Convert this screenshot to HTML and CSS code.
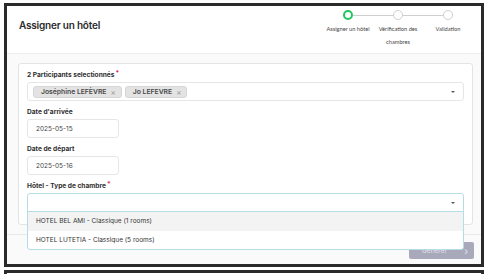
FILE: index.html
```html
<!DOCTYPE html>
<html lang="fr">
<head>
    <meta charset="UTF-8">
    <meta name="viewport" content="width=device-width, initial-scale=1.0">
    <title>Assigner un hôtel</title>
    <link rel="stylesheet" href="styles.css">
</head>
<body>
    <div class="frame">
        <!-- Modal Header -->
        <div class="modal-header">
            <h1>Assigner un hôtel</h1>
            <div class="stepper">
                <div class="step-dots">
                    <span class="dot active"></span>
                    <span class="bar"></span>
                    <span class="dot"></span>
                    <span class="bar"></span>
                    <span class="dot"></span>
                </div>
                <div class="step-labels">
                    <span>Assigner un hôtel</span>
                    <span>Vérification des chambres</span>
                    <span>Validation</span>
                </div>
            </div>
        </div>

        <!-- Modal Body -->
        <div class="modal-body">
            <div class="card">
                <div class="field">
                    <label>2 Participants selectionnés<span class="req">*</span></label>
                    <div class="multi">
                        <span class="tag">Joséphine LEFÈVRE <span class="x">×</span></span>
                        <span class="tag">Jo LEFEVRE <span class="x">×</span></span>
                        <span class="caret"></span>
                    </div>
                </div>

                <div class="field">
                    <label>Date d'arrivée</label>
                    <div class="input">2025-05-15</div>
                </div>

                <div class="field">
                    <label>Date de départ</label>
                    <div class="input">2025-05-16</div>
                </div>

                <div class="field last">
                    <label>Hôtel - Type de chambre<span class="req">*</span></label>
                    <div class="select-wrap">
                        <div class="select focused">
                            <span class="caret"></span>
                        </div>
                        <ul class="menu">
                            <li class="hover">HOTEL BEL AMI - Classique (1 rooms)</li>
                            <li>HOTEL LUTETIA - Classique (5 rooms)</li>
                        </ul>
                    </div>
                </div>
            </div>
        </div>

        <!-- Modal Footer -->
        <div class="modal-footer">
            <button disabled>Générer <span class="arrow">›</span></button>
        </div>
    </div>
    <div class="frame-next"></div>
</body>
</html>
```

FILE: styles.css
```css
* {
    margin: 0;
    padding: 0;
    box-sizing: border-box;
}

body {
    font-family: 'Inter', 'Liberation Sans', sans-serif;
    background: white;
    color: #333;
    width: 488px;
    height: 274px;
    overflow: hidden;
}

/* Screenshot frame */
.frame {
    margin: 3px 0 0 4px;
    width: 480px;
    height: 264px;
    border: 3px solid #2a2a2a;
    background: #fafafa;
    display: flex;
    flex-direction: column;
}

.frame-next {
    margin: 3px 0 0 4px;
    width: 480px;
    height: 10px;
    border: 3px solid #2a2a2a;
    border-bottom: none;
}

/* Header */
.modal-header {
    height: 48px;
    background: white;
    border-bottom: 1px solid #ededed;
    display: flex;
    justify-content: space-between;
    align-items: flex-start;
    padding: 4px 8px 0 12px;
}

h1 {
    font-size: 10px;
    font-weight: 600;
    color: #2b2b2b;
    padding-top: 9px;
    letter-spacing: -0.2px;
}

/* Stepper */
.stepper {
    width: 150px;
    font-family: 'Lato', sans-serif;
}

.step-dots {
    display: flex;
    align-items: center;
    padding: 0 20px;
    height: 10px;
}

.dot {
    width: 10px;
    height: 10px;
    border-radius: 50%;
    border: 1.5px solid #cfcfcf;
    background: white;
    flex: none;
}

.dot.active {
    border: 2px solid #22c55e;
}

.bar {
    flex: 1;
    height: 1px;
    background: #cfcfcf;
}

.step-labels {
    display: flex;
    margin-top: 2px;
}

.step-labels span {
    width: 50px;
    text-align: center;
    font-size: 5.7px;
    line-height: 13px;
    color: #444;
}

/* Body */
.modal-body {
    flex: 1;
    padding: 9px 8px 9px 11px;
}

.card {
    background: white;
    border: 1px solid #e3e3e3;
    border-radius: 3px;
    padding: 6px 8px 12px 8px;
}

.field {
    margin-bottom: 6px;
}

.field.last {
    margin-bottom: 0;
}

label {
    display: block;
    font-size: 6.6px;
    font-weight: 700;
    line-height: 10px;
    margin-bottom: 2px;
    color: #2f2f2f;
}

.req {
    color: #e0245e;
    margin-left: 1px;
    position: relative;
    top: -2px;
}

.multi {
    height: 19px;
    border: 1px solid #e6e6e6;
    border-radius: 3px;
    display: flex;
    align-items: center;
    gap: 3px;
    padding: 0 4px 0 5px;
}

.tag {
    height: 12px;
    background: #e3e3e3;
    border: 1px solid #d6d6d6;
    border-radius: 3px;
    padding: 0 5px 0 7px;
    font-size: 6.8px;
    font-weight: 600;
    color: #4a4a4a;
    display: flex;
    align-items: center;
    gap: 4px;
}

.tag .x {
    color: #9a9a9a;
    font-size: 8px;
    font-weight: 400;
}

.caret {
    margin-left: auto;
    margin-right: 4px;
    width: 0;
    height: 0;
    border-left: 2px solid transparent;
    border-right: 2px solid transparent;
    border-top: 2.5px solid #555;
}

.input {
    width: 92px;
    height: 19px;
    border: 1px solid #e6e6e6;
    border-radius: 3px;
    font-size: 6.5px;
    color: #444;
    padding-left: 8px;
    display: flex;
    align-items: center;
}

/* Hotel select with open menu */
.select-wrap {
    position: relative;
}

.select {
    height: 19px;
    border: 1px solid #e6e6e6;
    border-radius: 3px;
    display: flex;
    align-items: center;
    padding: 0 4px;
}

.select.focused {
    border-color: #b5dde6;
    border-radius: 3px 3px 0 0;
}

.menu {
    list-style: none;
    position: absolute;
    top: 18px;
    left: 0;
    right: 0;
    background: white;
    border: 1px solid #b5dde6;
    border-radius: 0 0 3px 3px;
    z-index: 2;
}

.menu li {
    height: 18.5px;
    display: flex;
    align-items: center;
    padding-left: 8px;
    font-size: 6.5px;
    color: #333;
}

.menu li.hover {
    background: #f3f3f3;
}

/* Footer */
.modal-footer {
    height: 30px;
    border-top: 1px solid #e8e8e8;
    display: flex;
    justify-content: flex-end;
    padding: 7px 7px 0 0;
}

button {
    width: 65px;
    height: 17px;
    background: #a9a9bc;
    color: #e6e6ee;
    border: none;
    border-radius: 2px;
    font-family: 'Inter', sans-serif;
    font-size: 6.5px;
    display: flex;
    align-items: center;
    justify-content: space-between;
    padding: 0 6px 0 13px;
}

.arrow {
    font-size: 10px;
    line-height: 1;
}
```
